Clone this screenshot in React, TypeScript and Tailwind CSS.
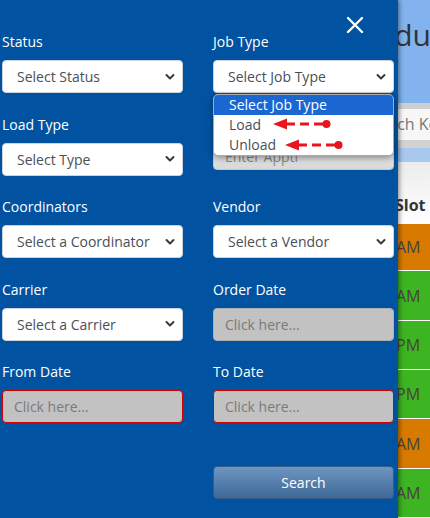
const font = { fontFamily: '"Open Sans", "Liberation Sans", sans-serif' };

function Chevron() {
  return (
    <svg width="10" height="7" viewBox="0 0 10 7" className="pointer-events-none absolute right-[7px] top-1/2 -translate-y-1/2">
      <path d="M1.5 1.5 L5 5 L8.5 1.5" fill="none" stroke="#343a40" strokeWidth="2" strokeLinecap="round" strokeLinejoin="round" />
    </svg>
  );
}

function SelectBox({ text }: { text: string }) {
  return (
    <div className="relative h-[33px] rounded-[4px] border border-[#ced4da] bg-white flex items-center pl-[14px] text-[14px] text-[#495057]">
      {text}
      <Chevron />
    </div>
  );
}

function DateBox({ danger }: { danger?: boolean }) {
  return (
    <div
      className={`h-[33px] rounded-[4px] bg-[#c2c2c2] flex items-center pl-[11px] text-[14px] text-[#7a7a7a] ${
        danger ? 'border-[1.5px] border-[#d40000]' : 'border border-[#b0b0b0]'
      }`}
    >
      Click here...
    </div>
  );
}

function Arrow() {
  return (
    <svg width="58" height="12" viewBox="0 0 58 12">
      <polygon points="0,6 14,0.5 14,11.5" fill="#e8141e" />
      <line x1="13" y1="6" x2="54" y2="6" stroke="#e8141e" strokeWidth="3.2" strokeDasharray="9 5" />
      <circle cx="53.5" cy="6" r="4" fill="#e8141e" />
    </svg>
  );
}

function Field({ label, hideLabel, children }: { label: string; hideLabel?: boolean; children: React.ReactNode }) {
  return (
    <div className="flex flex-col">
      <div className={`text-[14px] leading-[20px] text-white mb-[8px] ${hideLabel ? 'invisible' : ''}`}>{label}</div>
      {children}
    </div>
  );
}

export default function App() {
  const rows = [
    { c: 'bg-[#d87a00]', t: 'AM', h: 'h-[48px]' },
    { c: 'bg-[#3db421]', t: 'AM', h: 'h-[50px]' },
    { c: 'bg-[#3db421]', t: 'PM', h: 'h-[50px]' },
    { c: 'bg-[#3db421]', t: 'PM', h: 'h-[50px]' },
    { c: 'bg-[#d87a00]', t: 'AM', h: 'h-[50px]' },
    { c: 'bg-[#3db421]', t: 'AM', h: 'h-[50px]' },
  ];

  return (
    <div className="relative w-[430px] h-[518px] overflow-hidden bg-white" style={font}>
      {/* page behind the drawer */}
      <div className="absolute inset-0 flex flex-col">
        <div className="h-[104px] bg-[#82b3ee] flex justify-end pt-[12px] text-[30px] text-[#333] -mr-[1px]">
          Schedu
        </div>
        <div className="h-[6px] bg-[#cfcfcf]" />
        <div className="h-[32px] bg-[#f7f7f7] flex items-center pl-[364px] text-[16px] text-[#777] whitespace-nowrap">
          Search Ke
        </div>
        <div className="h-[8px] bg-[#d2d2d2]" />
        <div className="h-[14px] bg-[#a9c8ef]" />
        <div className="h-[63px] bg-gradient-to-b from-[#ececec] to-white flex items-end pb-[7px] pl-[395px] text-[16px] font-bold text-[#333]">
          Slot
        </div>
        {rows.map((r, i) => (
          <div key={i} className={`${r.h} ${r.c} border-b border-white flex items-center pl-[396px] text-[16px] text-[#444]`}>
            {r.t}
          </div>
        ))}
      </div>

      {/* filter drawer */}
      <div className="absolute left-0 top-0 h-full w-[398px] bg-[#0152a0] shadow-[2px_0_4px_rgba(0,0,0,0.35)]">
        <svg width="18" height="18" viewBox="0 0 18 18" className="absolute left-[346px] top-[16px]">
          <path d="M2 2 L16 16 M16 2 L2 16" stroke="white" strokeWidth="2.4" strokeLinecap="round" />
        </svg>

        <div className="grid grid-cols-[181px_181px] gap-x-[30px] gap-y-[21.5px] pl-[2px] pt-[32px]">
          <Field label="Status">
            <SelectBox text="Select Status" />
          </Field>
          <Field label="Job Type">
            <div className="relative">
              <SelectBox text="Select Job Type" />
              <div className="absolute left-0 right-0 top-[34px] z-10 rounded-[5px] border border-[#aaa] bg-white shadow-[0_2px_6px_rgba(0,0,0,0.4)] text-[14px] text-[#495057]">
                <div className="h-[20px] leading-[20px] pl-[15px] bg-[#1a67d2] text-white rounded-t-[4px]">Select Job Type</div>
                <div className="relative h-[20px] leading-[20px] pl-[15px]">
                  Load
                  <span className="absolute left-[59px] top-[3px] flex">
                    <Arrow />
                  </span>
                </div>
                <div className="relative h-[20px] leading-[20px] pl-[15px]">
                  Unload
                  <span className="absolute left-[71px] top-[4px] flex">
                    <Arrow />
                  </span>
                </div>
              </div>
            </div>
          </Field>

          <Field label="Load Type">
            <SelectBox text="Select Type" />
          </Field>
          <Field label="Appt #" hideLabel>
            <div className="h-[27px] rounded-[4px] bg-gradient-to-b from-[#eeeeee] to-[#d8d8d8] border border-[#c8c8c8] flex items-center pl-[11px] text-[14px] text-[#888]">
              Enter Apptl
            </div>
          </Field>

          <Field label="Coordinators">
            <SelectBox text="Select a Coordinator" />
          </Field>
          <Field label="Vendor">
            <SelectBox text="Select a Vendor" />
          </Field>

          <Field label="Carrier">
            <SelectBox text="Select a Carrier" />
          </Field>
          <Field label="Order Date">
            <DateBox />
          </Field>

          <Field label="From Date">
            <DateBox danger />
          </Field>
          <Field label="To Date">
            <DateBox danger />
          </Field>

          <div />
          <button className="mt-[21.5px] h-[33px] rounded-[4px] border border-[#355d88] bg-gradient-to-b from-[#6d96c2] to-[#3e6897] text-white text-[14px]">
            Search
          </button>
        </div>
      </div>
    </div>
  );
}
